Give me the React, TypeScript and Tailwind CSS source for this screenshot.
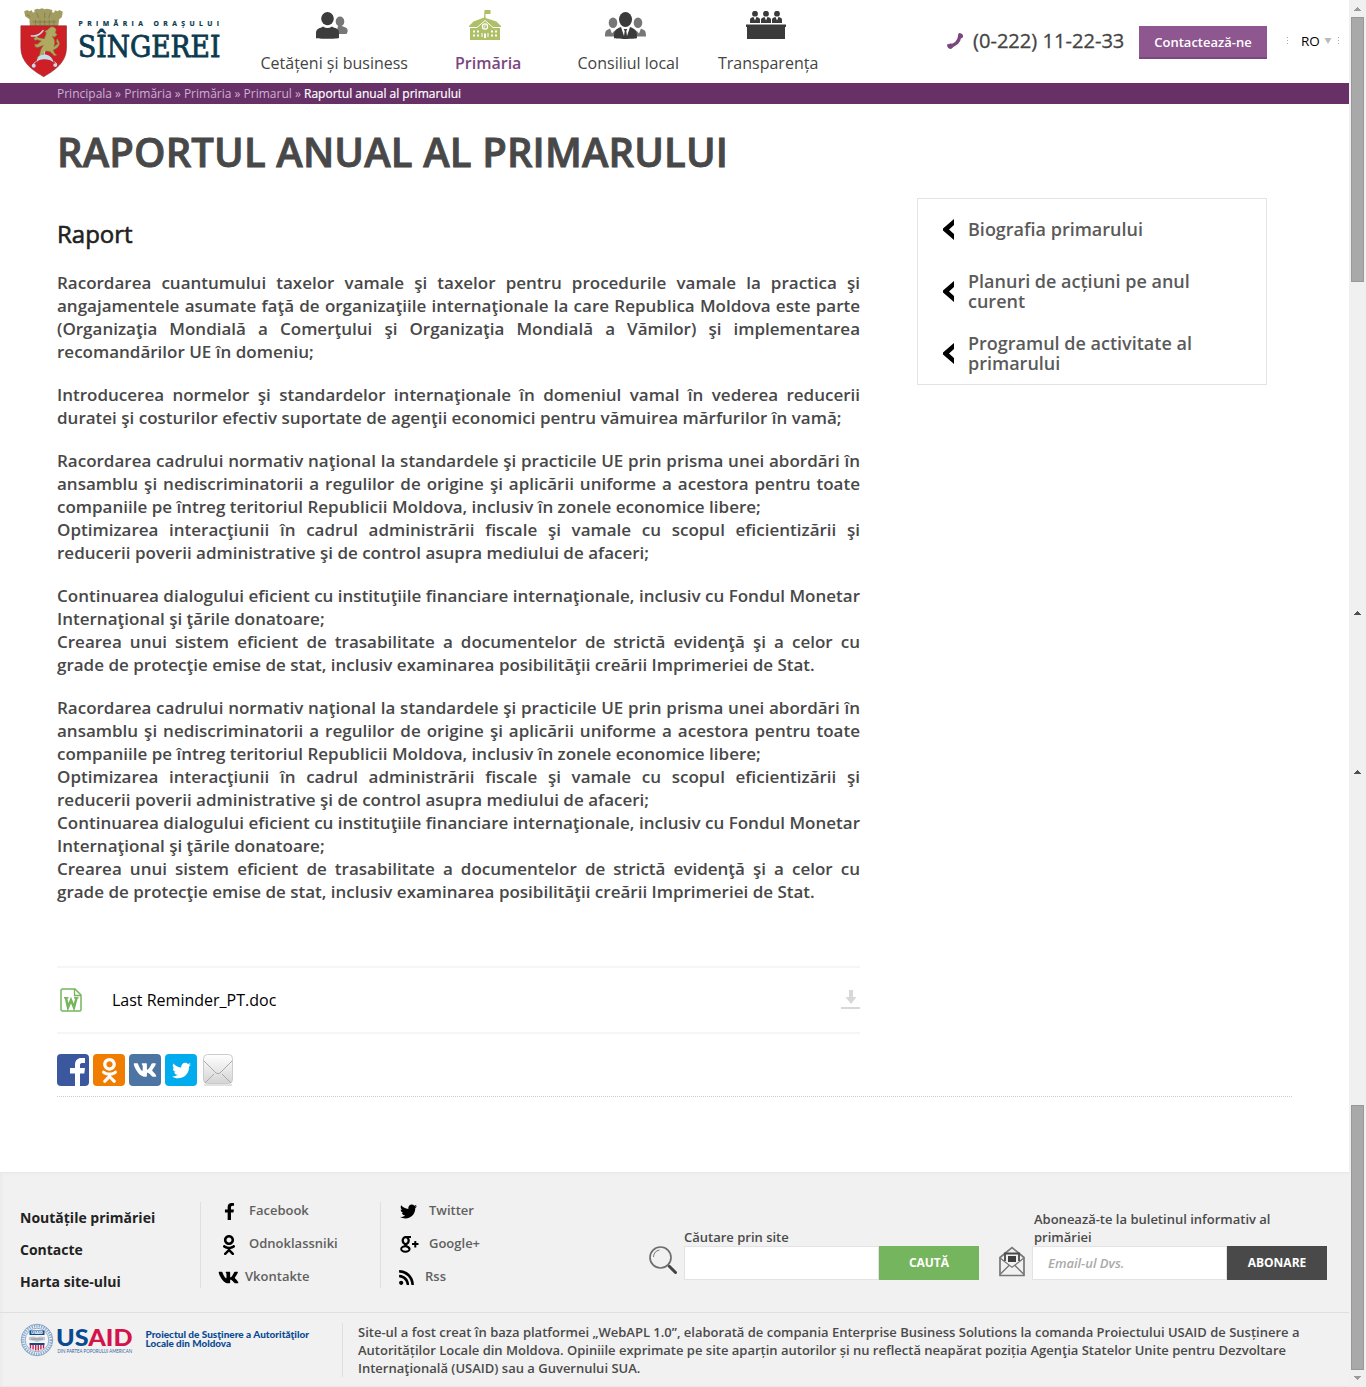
import type { ReactNode } from 'react';
import { FaFacebookF, FaOdnoklassniki, FaVk, FaTwitter, FaRss } from 'react-icons/fa';

function Crest() {
  return (
    <svg viewBox="0 0 144 212" className="h-[70px] w-12 shrink-0">
      <path d="M12 10l10-4 5 4 8-3 3 7 5-1V5l8-3 6 2 9-3 8 3 7-2 8 2 8 2v8l6 0 2-7 9 3 4-4 11 5-3 17-8 6-3 22H29l-1-22-13-9z" fill="#a39c60" />
      <path d="M20 20l10 6m8 16h72M50 14l6 16m18-16v16m18-16l-6 16m-40 6v16m14-16v16m14-16v16m14-16v16m14-16v16" stroke="#7c7b4b" strokeWidth="2.500" fill="none" />
      <path d="M2 54h138v66c0 44-34 68-69 88C36 188 2 164 2 120z" fill="#ce1f26" stroke="#8e2b2e" strokeWidth="2" />
      <path d="M91 58c8-3 17 1 18 9l-3 8 6 5-7 8-8-2c9 9 9 22 5 31l12-9c-6-6-6-13 0-15-1 7 8 9 4 19-5 9-10 12-18 15l4 10 7 5-7 3-14-13-11-2-12 12-2 11-15-2 8-7 5-20 7-11-17 7-8-3-1-8 8 1 12-10-12-4-8 2-3-7 5-2-3-5 7-2 4 8 19 3 6-17-5-6 8-3z" fill="#b0a962" stroke="#7b7435" strokeWidth="1.500" />
      <path d="M32 84c18 3 29-3 38-17" fill="none" stroke="#c3dcec" strokeWidth="5" />
      <path d="M49 165c2-17 12-24 24-24s25 8 28 24c-7-7-16-10-28-10s-19 3-24 10z" fill="#c4ddec" />
      <path d="M73 145v-13m-26 30l-8 9m64-9l8 8" stroke="#c4ddec" strokeWidth="3" />
      <circle cx="41" cy="175" r="6" fill="#c4ddec" />
      <circle cx="106" cy="173" r="6" fill="#c4ddec" />
    </svg>
  );
}

function Logo() {
  return (
    <div className="mt-2 ml-5 flex h-[70px] w-[202px]">
      <Crest />
      <svg viewBox="68 8 154 70" className="h-[70px] w-[154px] shrink-0">
        <text x="78.500" y="25.500" fontSize="6.800" fontWeight="700" fill="#0b3a4e" stroke="#0b3a4e" strokeWidth=".2" fontFamily="Open Sans" textLength="140.500" lengthAdjust="spacing">PRIMĂRIA ORAȘULUI</text>
        <text x="78" y="57.300" fontSize="29.500" fill="#0b3a4e" stroke="#0b3a4e" strokeWidth=".8" fontFamily="DejaVu Serif Condensed, DejaVu Serif" fontStretch="condensed" textLength="142.500" lengthAdjust="spacingAndGlyphs">SÎNGEREI</text>
      </svg>
    </div>
  );
}

function PeopleIcon() {
  return (
    <svg viewBox="0 0 32 27" className="h-[27px] w-8">
      <ellipse cx="24" cy="9.500" rx="4.300" ry="5" fill="#777" />
      <path d="M20 22h10.500c1.500-2 1.500-4 .5-5.500-1.600-1.500-4-1.500-5-2.500h-4z" fill="#777" />
      <ellipse cx="11.500" cy="6.600" rx="6.300" ry="6.600" fill="#3c3c3c" />
      <path d="M0 26V20c1-4 4-3.500 7-5.500 3 2 6 2 9 0 3 2 6.500 1.500 7 5.500v6c-1 1-22 1-23 0z" fill="#3c3c3c" />
    </svg>
  );
}

function TownHallIcon() {
  return (
    <svg viewBox="0 0 32 30" className="-mb-px h-[30px] w-8">
      <path d="M15.500 0h6v4h-5v4l11 3.500 4.500 4.500v1.500H0V16l4.500-4.500 10.500-4z" fill="#adc067" />
      <path d="M1 17h30v13H1z" fill="#adc067" />
      <path d="M0 17.500h8L16 10.500l8 7h8" fill="none" stroke="#fff" strokeWidth="1" />
      <circle cx="16" cy="16.500" r="2.600" fill="#adc067" stroke="#fff" strokeWidth="1.200" />
      <path d="M16 15v2h-1.300" fill="none" stroke="#fff" strokeWidth=".8" />
      <path d="M4 20.500h2v2H4zm4 0h2v2H8zm14 0h2v2h-2zm4 0h2v2h-2zM4 24.500h2v2H4zm4 0h2v2H8zm14 0h2v2h-2zm4 0h2v2h-2zM12.500 23h1v4h-1zm6 0h1v4h-1zM15 23.500h2v4.500h-2z" fill="#fff" />
    </svg>
  );
}

function CouncilIcon() {
  return (
    <svg viewBox="0 0 41 27" className="h-[27px] w-[41px]">
      <g fill="#777">
        <ellipse cx="8" cy="10.800" rx="4.300" ry="5.300" />
        <ellipse cx="33" cy="10.800" rx="4.300" ry="5.300" />
        <path d="M0 24.500c0-6 1-6 5-8l2 5 2.500-3 2 6z" />
        <path d="M41 24.500c0-6-1-6-5-8l-2 5-2.500-3-2 6z" />
      </g>
      <ellipse cx="20.500" cy="7.500" rx="6.500" ry="7.500" fill="#3a3a3a" />
      <path d="M9 26c0-8 1-8.500 7-11l3 9 .7-5-1-2h3.600l-1 2 .7 5 3-9c6 2.500 7 3 7 11-1 1.200-22 1.200-23 0z" fill="#3a3a3a" />
    </svg>
  );
}

function AssemblyIcon() {
  return (
    <svg viewBox="0 0 40 28" className="h-7 w-10">
      {[9, 20, 31].map((cx) => (
        <g key={cx} transform={`translate(${cx} 0)`} fill="#3a3a3a">
          <circle cx="0" cy="2.700" r="2.900" />
          <path d="M-5 12V8.500C-4.600 6.500-3 6.600-1.500 6L0 9.500 1.500 6C3 6.600 4.600 6.500 5 8.500V12z" />
        </g>
      ))}
      <path d="M0 13.500h40v2.500h-1v12H1V16H0z" fill="#3a3a3a" />
    </svg>
  );
}

const dots = 'h-2 w-px shrink-0 bg-[repeating-linear-gradient(to_bottom,#aaa_0_1px,transparent_1px_3px)]';

function NavItem({ icon, label, active, className }: { icon: ReactNode; label: string; active?: boolean; className: string }) {
  return (
    <a className={`flex flex-col ${className}`}>
      <span className="flex h-[39px] items-end justify-center pr-[6px]">{icon}</span>
      <span className={`mt-[13px] text-base leading-[22px] whitespace-nowrap ${active ? 'font-semibold text-[#7b4680]' : 'text-[#444]'}`}>{label}</span>
    </a>
  );
}

function Header() {
  return (
    <header className="flex h-[83px] bg-white">
      <Logo />
      <nav className="ml-[38.500px] flex">
        <NavItem className="w-[148px]" icon={<PeopleIcon />} label="Cetățeni și business" />
        <NavItem className="ml-[46.500px] w-[66px]" icon={<TownHallIcon />} label="Primăria" active />
        <NavItem className="ml-[56.500px] w-[102px]" icon={<CouncilIcon />} label="Consiliul local" />
        <NavItem className="ml-[38.500px] w-[101px]" icon={<AssemblyIcon />} label="Transparența" />
      </nav>
      <div className="ml-auto flex h-[82px] items-center pr-[10px]">
        <svg viewBox="0 0 16 16" className="mr-px h-4 w-4">
          <path d="M2 12.800C8 12.500 12 9 12.800 3" fill="none" stroke="#7b4680" strokeWidth="3.400" />
          <path d="M0 11.500l4-1 2 4-2 1.500c-2 0-4-1.500-4-4.500zM11 2l1-2c3 0 4.500 2 4 4l-1.500 1.500-3.500-2z" fill="#7b4680" />
        </svg>
        <span className="ml-[9px] w-[152px] pb-px text-[20.100px] leading-7 whitespace-nowrap text-[#444] [-webkit-text-stroke:0.300px_#444]">(0-222) 11-22-33</span>
        <button className="mt-[3px] ml-[14px] h-[33px] w-32 border-b-2 border-[#7b477c] bg-[#8f578f] pt-0.5 text-[13px] font-semibold text-white">Contactează-ne</button>
        <i className={`ml-5 ${dots}`} />
        <span className="ml-[13px] w-[19px] text-[13.500px] text-black">RO</span>
        <svg viewBox="0 0 8 6" className="ml-1 h-1.5 w-2"><path d="M.5 0h7L4 6z" fill="#bbb" /></svg>
        <i className={`ml-[6px] ${dots}`} />
      </div>
    </header>
  );
}

const paragraphs: string[][] = [
  ['Racordarea cuantumului taxelor vamale şi taxelor pentru procedurile vamale la practica şi angajamentele asumate faţă de organizaţiile internaţionale la care Republica Moldova este parte (Organizaţia Mondială a Comerţului şi Organizaţia Mondială a Vămilor) şi implementarea recomandărilor UE în domeniu;'],
  ['Introducerea normelor şi standardelor internaţionale în domeniul vamal în vederea reducerii duratei şi costurilor efectiv suportate de agenţii economici pentru vămuirea mărfurilor în vamă;'],
  [
    'Racordarea cadrului normativ naţional la standardele şi practicile UE prin prisma unei abordări în ansamblu şi nediscriminatorii a regulilor de origine şi aplicării uniforme a acestora pentru toate companiile pe întreg teritoriul Republicii Moldova, inclusiv în zonele economice libere;',
    'Optimizarea interacţiunii în cadrul administrării fiscale şi vamale cu scopul eficientizării şi reducerii poverii administrative şi de control asupra mediului de afaceri;',
  ],
  [
    'Continuarea dialogului eficient cu instituţiile financiare internaţionale, inclusiv cu Fondul Monetar Internaţional şi ţările donatoare;',
    'Crearea unui sistem eficient de trasabilitate a documentelor de strictă evidenţă şi a celor cu grade de protecţie emise de stat, inclusiv examinarea posibilităţii creării Imprimeriei de Stat.',
  ],
  [
    'Racordarea cadrului normativ naţional la standardele şi practicile UE prin prisma unei abordări în ansamblu şi nediscriminatorii a regulilor de origine şi aplicării uniforme a acestora pentru toate companiile pe întreg teritoriul Republicii Moldova, inclusiv în zonele economice libere;',
    'Optimizarea interacţiunii în cadrul administrării fiscale şi vamale cu scopul eficientizării şi reducerii poverii administrative şi de control asupra mediului de afaceri;',
    'Continuarea dialogului eficient cu instituţiile financiare internaţionale, inclusiv cu Fondul Monetar Internaţional şi ţările donatoare;',
    'Crearea unui sistem eficient de trasabilitate a documentelor de strictă evidenţă şi a celor cu grade de protecţie emise de stat, inclusiv examinarea posibilităţii creării Imprimeriei de Stat.',
  ],
];

function FileRow() {
  return (
    <a className="mt-[63px] flex h-[68px] items-center border-y-2 border-[#f6f6f6]">
      <svg viewBox="0 0 22 24" className="ml-[3px] h-6 w-[22px]" fill="none" stroke="#76b55c">
        <path d="M2.500 1H15l6 6v14.500a1.500 1.500 0 0 1-1.500 1.500h-17A1.500 1.500 0 0 1 1 21.500v-19A1.500 1.500 0 0 1 2.500 1z" strokeWidth="1.500" />
        <path d="M14.500 1v6.500H21" strokeWidth="1.300" />
        <path d="M4 9.800h4.500M14 9.800h4.500" strokeWidth="1.600" />
        <path d="M6 10l2 9.500L11 12l3 7.500 2.500-9.500" strokeWidth="2.500" />
      </svg>
      <span className="ml-[30px] text-base text-black">Last Reminder_PT.doc</span>
      <svg viewBox="0 0 19 19" className="mb-0.5 ml-auto h-[19px] w-[19px]" fill="#d8d8d8">
        <path d="M8 0h4v7h3.500L10 14 4.500 7H8zM0 17h19v2H0z" />
      </svg>
    </a>
  );
}

function ShareBar() {
  return (
    <div className="mt-5 flex h-8 gap-1">
      <span className="flex h-8 w-8 overflow-hidden rounded bg-[#3b579d]">
        <svg viewBox="0 0 32 32" className="h-8 w-8"><path d="M18 32V19.500h-5V14h5v-3c0-5 3-7 6-7h4v5h-3c-1.500 0-2 1-2 2v3h5l-.7 5.500H23V32z" fill="#fff" /></svg>
      </span>
      <span className="flex h-8 w-8 items-center justify-center rounded bg-[#f07c00] text-white"><FaOdnoklassniki size={25} /></span>
      <span className="flex h-8 w-8 items-center justify-center rounded bg-[#4d75a3] text-white"><FaVk size={24} /></span>
      <span className="flex h-8 w-8 items-center justify-center rounded bg-[#00aced] text-white"><FaTwitter size={19} /></span>
      <svg viewBox="0 0 32 32" className="ml-px h-8 w-8">
        <defs><linearGradient id="mail" x1="0" x2="0" y1="0" y2="1"><stop stopColor="#fff" /><stop offset="1" stopColor="#d4d4d4" /></linearGradient></defs>
        <path d="M2 31h28" stroke="#e2e2e2" strokeWidth="2" />
        <rect x="1.500" y=".5" width="29" height="29" rx="4" fill="url(#mail)" stroke="#ccc" />
        <path d="M2 7l12 12q2 1.500 4 0L30 7M3 29l9-9m8 0l9 9" fill="none" stroke="#aaa" />
      </svg>
    </div>
  );
}

function Sidebar() {
  return (
    <aside className="mt-[19px] ml-[57px] h-[187px] w-[350px] border border-[#e3e3e3]">
      <div className="-mt-px">
        {['Biografia primarului', 'Planuri de acțiuni pe anul curent', 'Programul de activitate al primarului'].map((t) => (
          <a key={t} className="flex h-[62px] items-center pl-[25px]">
            <svg viewBox="0 0 11 21" className="h-[21px] w-[11px] shrink-0"><path d="M11 0v6L6 10.500l5 4.500v6L0 11.500v-2z" fill="#000" /></svg>
            <span className="ml-[14px] w-[230px] text-lg leading-5 font-semibold text-[#5a5a5a]">{t}</span>
          </a>
        ))}
      </div>
    </aside>
  );
}

function GooglePlus() {
  return (
    <svg viewBox="0 0 19 17" className="h-[17px] w-[19px]" fill="none" stroke="#000">
      <ellipse cx="5.700" cy="4.600" rx="3" ry="3.500" strokeWidth="2.300" />
      <ellipse cx="5.400" cy="13" rx="4.200" ry="2.700" strokeWidth="2" />
      <path d="M5.500 1H11M6 8c-2 1-.5 1.500 1 2.500s2 1.500 2.200 2.500" strokeWidth="1.800" />
      <path d="M12 8h6.500M15.300 5v6.500" strokeWidth="2" />
    </svg>
  );
}

function SocialColumn({ items }: { items: { icon: ReactNode; label: string; gap: string }[] }) {
  return (
    <div className="h-[86px] w-[180px] border-l border-[#dfdfdf]">
      <div className="-mt-2">
        {items.map((i) => (
          <a key={i.label} className="flex h-[33px] items-center text-[13px] font-semibold text-[#606060]">
            <span className={`flex items-center pt-[2px] text-black ${i.gap}`}>{i.icon}</span>
            {i.label}
          </a>
        ))}
      </div>
    </div>
  );
}

function Usaid() {
  return (
    <svg viewBox="20 1323 300 36" className="h-9 w-[300px] shrink-0">
      <circle cx="37" cy="1340" r="14" fill="#f4f6f9" stroke="#8fadcf" strokeWidth="3" strokeDasharray="1.400 1" />
      <circle cx="37" cy="1340" r="15.800" fill="none" stroke="#4e7db0" strokeWidth=".6" />
      <circle cx="37" cy="1340" r="11.800" fill="none" stroke="#4e7db0" strokeWidth=".6" />
      <path d="M29.500 1330.500h15v4.500h-15z" fill="#0c4a8d" />
      <text x="31" y="1334.300" fontSize="4" fontWeight="800" fill="#fff" fontFamily="Open Sans" textLength="12">USAID</text>
      <path d="M29 1337l5-.5 3 1 3-1 5 .5v3l-5 1-3 1-3-1-5-1z" fill="#c5c8cb" />
      <path d="M31 1339h12" stroke="#777" strokeWidth=".7" />
      <path d="M29.500 1343h15v2h-15z" fill="#0c4a8d" />
      <path d="M30.500 1345v3.500m2.600-3.500v4.500m2.600-4.500v5.500m2.600-5.500v5.500m2.600-5.500v4.500m2.600-4.500v3.500" stroke="#d12048" strokeWidth="1.400" />
      <text x="56" y="1345.800" fontSize="22.500" fontFamily="Lato, Open Sans" fontWeight="900" fill="#0a4a93" textLength="76.500" lengthAdjust="spacingAndGlyphs">US<tspan fill="#d3134a">AID</tspan></text>
      <text x="57.500" y="1352.500" fontSize="5" fill="#33669f" fontFamily="Lato, Open Sans" textLength="74.500" lengthAdjust="spacingAndGlyphs">DIN PARTEA POPORULUI AMERICAN</text>
      <g fontFamily="Lato, Open Sans" fontWeight="900" fontSize="9.400" fill="#0a4a93">
        <text x="145.500" y="1337.800" textLength="163.500" lengthAdjust="spacingAndGlyphs">Proiectul de Susţinere a Autorităţilor</text>
        <text x="145.500" y="1347.300" textLength="85.500" lengthAdjust="spacingAndGlyphs">Locale din Moldova</text>
      </g>
    </svg>
  );
}

function Footer() {
  return (
    <footer className="h-[215px] border-t border-b border-[#e9e9e9] bg-[#f1f1f1] shadow-[inset_2px_1px_2px_#ebebeb]">
      <div className="flex h-[140px] border-b border-[#dfdfdf] pt-[29px]">
        <div className="ml-5 w-[180px] text-sm leading-8 font-bold text-[#222]">
          <a className="block">Noutățile primăriei</a>
          <a className="block">Contacte</a>
          <a className="block">Harta site-ului</a>
        </div>
        <SocialColumn
          items={[
            { icon: <FaFacebookF size={17} />, label: 'Facebook', gap: 'ml-5 mr-[11px]' },
            { icon: <FaOdnoklassniki size={20} />, label: 'Odnoklassniki', gap: 'ml-[18px] mr-[10px]' },
            { icon: <FaVk size={21} />, label: 'Vkontakte', gap: 'ml-[17px] mr-[6px]' },
          ]}
        />
        <SocialColumn
          items={[
            { icon: <FaTwitter size={17} />, label: 'Twitter', gap: 'ml-[19px] mr-3' },
            { icon: <GooglePlus />, label: 'Google+', gap: 'ml-[19px] mr-[10px]' },
            { icon: <FaRss size={17} />, label: 'Rss', gap: 'ml-[17px] mr-[10px]' },
          ]}
        />
        <form className="mt-[44px] ml-[89px] flex h-[34px]">
          <svg viewBox="0 0 28 29" className="h-[29px] w-7" fill="none">
            <circle cx="11.500" cy="11.500" r="10.500" stroke="#6e6e6e" strokeWidth="1.700" />
            <path d="M4.500 11a7.500 7.500 0 0 1 6-7" stroke="#777" />
            <path d="M19 19l2 2" stroke="#666" strokeWidth="2" />
            <path d="M20.500 20.500l6 6" stroke="#444" strokeWidth="3" strokeLinecap="round" />
          </svg>
          <div className="-mt-[18px] ml-[7px]">
            <label className="block text-[13px] leading-[18px] font-semibold text-[#4a4a4a]">Căutare prin site</label>
            <div className="flex">
              <input className="h-[34px] w-[195px] border border-[#e3e3e3] bg-white" />
              <button type="button" className="h-[34px] w-[100px] bg-[#75b55d] text-xs font-bold text-white">CAUTĂ</button>
            </div>
          </div>
        </form>
        <form className="mt-[44px] ml-5 flex h-[34px]">
          <svg viewBox="0 0 26 31" className="h-[31px] w-[26px]" fill="none" stroke="#777">
            <path d="M1 11.500L13 1.500l12 10V29.500H1z" strokeWidth="1.700" />
            <path d="M1 12l12 9 12-9M1 28.500l9-9M25 28.500l-9-9" strokeWidth="1.400" />
            <path d="M6 15V7.500h14V15l-7 5.500z" fill="#f1f1f1" stroke="none" />
            <path d="M6 15V7.500h14V15" strokeWidth="1.800" stroke="#4a4a4a" />
            <path d="M9 10h8v6H9z" fill="#3f3f3f" stroke="none" />
          </svg>
          <div className="-mt-9 ml-[7px]">
            <label className="ml-[2px] block w-[260px] text-[13px] leading-[18px] font-semibold text-[#4a4a4a]">Abonează-te la buletinul informativ al primăriei</label>
            <div className="flex">
              <input placeholder="Email-ul Dvs." className="h-[34px] w-[195px] border border-[#e3e3e3] bg-white pl-[15px] text-[13px] font-semibold italic placeholder:text-[#aaa]" />
              <button type="button" className="h-[34px] w-[100px] bg-[#494949] text-xs font-bold text-white">ABONARE</button>
            </div>
          </div>
        </form>
      </div>
      <div className="flex pt-[10px] pl-5">
        <Usaid />
        <p className="ml-[22px] h-[54px] w-[975px] border-l border-[#dfdfdf] pl-[15px] text-[13px] leading-[18px] font-semibold text-[#4a4a4a]">
          Site-ul a fost creat în baza platformei „WebAPL 1.0”, elaborată de compania Enterprise Business Solutions la comanda Proiectului USAID de Susținere a
          Autorităților Locale din Moldova. Opiniile exprimate pe site aparțin autorilor și nu reflectă neapărat poziția Agenţia Statelor Unite pentru Dezvoltare
          Internaţională (USAID) sau a Guvernului SUA.
        </p>
      </div>
    </footer>
  );
}

function Arrow({ down, color }: { down?: boolean; color: string }) {
  return (
    <svg viewBox="0 0 7 4" className="h-1 w-[7px] shrink-0" shapeRendering="crispEdges">
      <path d={down ? 'M0 0h7L3.500 4z' : 'M0 4h7L3.500 0z'} fill={color} />
    </svg>
  );
}

function Scrollbar() {
  return (
    <div className="flex h-[1387px] w-[17px] flex-col items-center bg-[#f0f0f0] pt-[7px]">
      <Arrow color="#9a9a9a" />
      <div className="mt-[6px] h-[265px] w-[13px] border border-[#989898] bg-[#a9a9a9]" />
      <div className="mt-[329px]"><Arrow color="#505050" /></div>
      <div className="mt-[155px]"><Arrow color="#505050" /></div>
      <div className="mt-[331px] h-[265px] w-[13px] border border-[#989898] bg-[#a9a9a9]" />
      <div className="mt-[6px]"><Arrow down color="#9a9a9a" /></div>
    </div>
  );
}

export default function App() {
  return (
    <div className="flex h-[1387px] w-[1366px] overflow-hidden bg-white font-['Open_Sans',sans-serif]">
      <div className="flex w-[1349px] flex-col">
        <Header />
        <div className="h-[21px] bg-[#673067] pl-[57px] text-xs leading-[21px] text-[#cfb0d3]">
          Principala » Primăria » Primăria » Primarul » <span className="text-white [-webkit-text-stroke:0.200px_#fff]">Raportul anual al primarului</span>
        </div>
        <main className="ml-[57px] h-[993px] w-[1235px] border-b border-dotted border-[#ccc]">
          <h1 className="pt-[21px] text-[40px] leading-[54px] font-semibold tracking-[0.140px] text-[#484848] [-webkit-text-stroke:0.900px_#484848]">RAPORTUL ANUAL AL PRIMARULUI</h1>
          <div className="flex">
            <article className="w-[803px]">
              <h2 className="mt-[38px] text-2xl leading-[34px] text-[#222] [-webkit-text-stroke:0.600px_#222]">Raport</h2>
              <div className="mt-5 flex flex-col gap-5 text-[17px] leading-[23px] font-semibold text-[#484848]">
                {paragraphs.map((lines, i) => (
                  <div key={i}>
                    {lines.map((l) => (
                      <p key={l} className="text-justify">{l}</p>
                    ))}
                  </div>
                ))}
              </div>
              <FileRow />
              <ShareBar />
            </article>
            <Sidebar />
          </div>
        </main>
        <div className="h-[75px]" />
        <Footer />
      </div>
      <Scrollbar />
    </div>
  );
}
